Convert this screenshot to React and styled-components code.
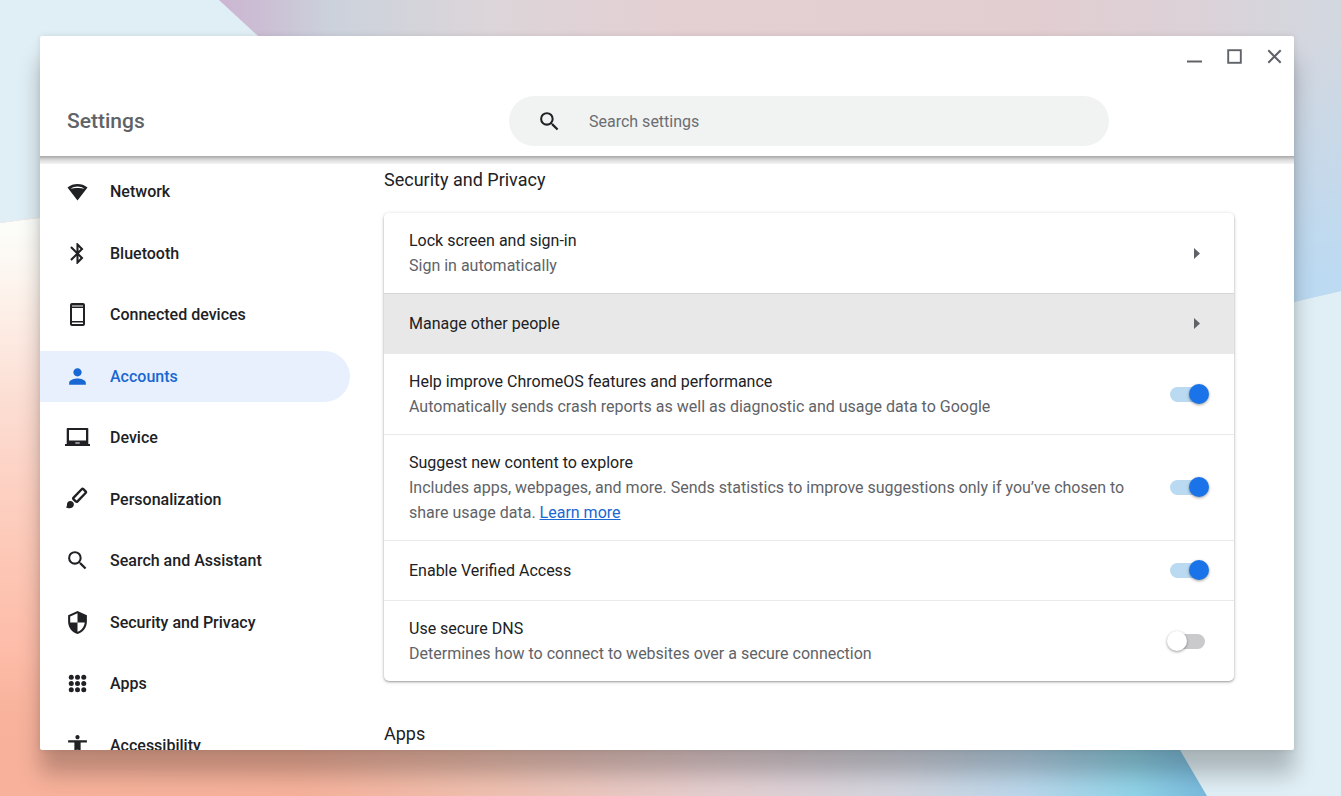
import React, { useState } from "react";
import styled, { createGlobalStyle, css } from "styled-components";
import {
  MdAccessibility,
  MdBluetooth,
  MdPerson,
  MdSearch,
  MdSecurity,
} from "react-icons/md";

const GlobalStyle = createGlobalStyle`
  * {
    box-sizing: border-box;
  }

  body {
    margin: 0;
    font-family: Roboto, "Liberation Sans", sans-serif;
    font-size: 16px;
    line-height: 25px;
    color: #202124;
  }

  button, input {
    font: inherit;
    color: inherit;
  }
`;

function NetworkIcon() {
  return (
    <svg width="25" height="25" viewBox="0 0 25 25" fill="currentColor">
      <path
        fillRule="evenodd"
        d="M2.5 8.4C8.3 3.9 16.7 3.9 22.5 8.4L12.5 21.5ZM5.6 9.9C9.5 8.7 15.5 8.7 19.4 9.9C15.5 6.8 9.5 6.8 5.6 9.9Z"
      />
    </svg>
  );
}

function PhoneIcon() {
  return (
    <svg width="25" height="25" viewBox="0 0 25 25" fill="currentColor">
      <path
        fillRule="evenodd"
        d="M7 1h11a2 2 0 0 1 2 2v19a2 2 0 0 1-2 2H7a2 2 0 0 1-2-2V3a2 2 0 0 1 2-2ZM7 3.4v1h11v-1ZM7 6v13h11V6ZM7 20.4v1.500h11v-1.500Z"
      />
    </svg>
  );
}

function LaptopIcon() {
  return (
    <svg width="25" height="25" viewBox="0 0 25 25" fill="currentColor">
      <path
        fillRule="evenodd"
        d="M2.5 3h20q.8 0 .8.8V19H25v2H0v-2h1.7V3.8q0-.8.8-.8ZM4 5v10.5h17V5ZM10.3 17.5v1h4.4v-1Z"
      />
    </svg>
  );
}

function BrushIcon() {
  return (
    <svg width="25" height="25" viewBox="0 0 25 25" fill="currentColor">
      <rect
        x="7.6"
        y="5.6"
        width="14"
        height="5.4"
        rx="1.2"
        fill="none"
        stroke="currentColor"
        strokeWidth="2.4"
        transform="rotate(-46 14.6 8.3)"
      />
      <path d="M5.2 14c2.2 0 3.7 1.5 3.7 3.4 0 2.4-1.9 3.8-4.4 3.8-1.3 0-2.6-.3-3.5-1 .7-.5 1-1.3 1-2.7C2 15.5 3.3 14 5.2 14Z" />
    </svg>
  );
}

function DotsIcon() {
  const steps = [6.25, 12.5, 18.75];
  return (
    <svg width="25" height="25" viewBox="0 0 25 25" fill="currentColor">
      {steps.map((y) =>
        steps.map((x) => <circle key={`${x}-${y}`} cx={x} cy={y} r="2.5" />)
      )}
    </svg>
  );
}

const menu = [
  { label: "Network", icon: <NetworkIcon /> },
  { label: "Bluetooth", icon: <MdBluetooth size={25} /> },
  { label: "Connected devices", icon: <PhoneIcon /> },
  { label: "Accounts", icon: <MdPerson size={25} />, active: true },
  { label: "Device", icon: <LaptopIcon /> },
  { label: "Personalization", icon: <BrushIcon /> },
  { label: "Search and Assistant", icon: <MdSearch size={25} /> },
  { label: "Security and Privacy", icon: <MdSecurity size={25} /> },
  { label: "Apps", icon: <DotsIcon /> },
  { label: "Accessibility", icon: <MdAccessibility size={25} /> },
];

function Wallpaper() {
  return (
    <WallpaperSvg viewBox="0 0 1341 796" preserveAspectRatio="none" aria-hidden="true">
      <defs>
        <linearGradient id="sky" gradientUnits="userSpaceOnUse" x1="219" y1="0" x2="1341" y2="0">
          <stop offset="0" stopColor="#ccb5d2" />
          <stop offset="0.04" stopColor="#cbbfd4" />
          <stop offset="0.1" stopColor="#cbd2dc" />
          <stop offset="0.24" stopColor="#dcd5d9" />
          <stop offset="0.42" stopColor="#e4cfd2" />
          <stop offset="0.72" stopColor="#e2cdd0" />
          <stop offset="0.88" stopColor="#dbd2d8" />
          <stop offset="1" stopColor="#d2d8e0" />
        </linearGradient>
        <linearGradient id="skyFade" x1="0" y1="0" x2="0" y2="1">
          <stop offset="0.1" stopColor="#bcdaf2" stopOpacity="0" />
          <stop offset="0.85" stopColor="#bcdaf2" />
        </linearGradient>
        <linearGradient id="sand" gradientUnits="userSpaceOnUse" x1="0" y1="0" x2="1207" y2="0">
          <stop offset="0" stopColor="#f8b29b" />
          <stop offset="0.25" stopColor="#f5b19a" />
          <stop offset="0.4" stopColor="#efbfae" />
          <stop offset="0.6" stopColor="#e3ced0" />
          <stop offset="0.75" stopColor="#d2d5df" />
          <stop offset="0.85" stopColor="#b9d6ea" />
          <stop offset="0.94" stopColor="#90d2e6" />
          <stop offset="1" stopColor="#78b9dc" />
        </linearGradient>
        <linearGradient id="sandFade" gradientUnits="userSpaceOnUse" x1="0" y1="218" x2="0" y2="750">
          <stop offset="0" stopColor="#fcfefb" />
          <stop offset="0.12" stopColor="#fdf5ee" />
          <stop offset="0.35" stopColor="#fcddd2" />
          <stop offset="0.6" stopColor="#fdcab9" />
          <stop offset="0.82" stopColor="#fdbca8" />
          <stop offset="1" stopColor="#f8b29b" stopOpacity="0" />
        </linearGradient>
      </defs>
      <path d="M219 0L258 36L700 420L1294 302L1341 291V0Z" fill="url(#sky)" />
      <path d="M1200 0H1341V291L1200 324Z" fill="url(#skyFade)" />
      <path d="M0 223Q20 220 40 218C500 180 900 300 1180 750L1207 796H0Z" fill="url(#sand)" />
      <path d="M0 223Q20 220 40 218C500 180 900 300 1180 750H0Z" fill="url(#sandFade)" />
    </WallpaperSvg>
  );
}

function LinkRow({ title, sub, hovered }) {
  return (
    <RowButton type="button" $hovered={hovered}>
      <RowText>
        <RowTitle>{title}</RowTitle>
        {sub && <RowSub>{sub}</RowSub>}
      </RowText>
      <Arrow width="6" height="11" viewBox="0 0 6 11" aria-hidden="true">
        <path d="M0 0L6 5.5L0 11Z" fill="currentColor" />
      </Arrow>
    </RowButton>
  );
}

function ToggleRow({ id, title, children, defaultOn }) {
  const [on, setOn] = useState(Boolean(defaultOn));
  return (
    <Row>
      <RowText>
        <RowTitle as="label" htmlFor={id}>
          {title}
        </RowTitle>
        {children && <RowSub>{children}</RowSub>}
      </RowText>
      <Toggle id={id} type="checkbox" checked={on} onChange={() => setOn(!on)} />
    </Row>
  );
}

function App() {
  return (
    <Desktop>
      <GlobalStyle />
      <Wallpaper />
      <Window>
        <Header>
          <Controls>
            <ControlButton type="button" aria-label="Minimize">
              <svg width="15" height="15" viewBox="0 0 15 15">
                <path d="M0 12.5H15" stroke="currentColor" strokeWidth="2" />
              </svg>
            </ControlButton>
            <ControlButton type="button" aria-label="Maximize">
              <svg width="15" height="15" viewBox="0 0 15 15">
                <rect x="1.2" y="1.2" width="12.6" height="12.6" fill="none" stroke="currentColor" strokeWidth="1.9" />
              </svg>
            </ControlButton>
            <ControlButton type="button" aria-label="Close">
              <svg width="15" height="15" viewBox="0 0 15 15">
                <path d="M1.3 1.3L13.7 13.7M13.7 1.3L1.3 13.7" stroke="currentColor" strokeWidth="2" />
              </svg>
            </ControlButton>
          </Controls>
          <Toolbar>
            <Title>Settings</Title>
            <SearchArea>
              <SearchBox>
                <MdSearch size={25} />
                <SearchInput type="search" placeholder="Search settings" aria-label="Search settings" />
              </SearchBox>
            </SearchArea>
          </Toolbar>
        </Header>
        <Body>
          <Sidebar>
            {menu.map((item) => (
              <MenuItem key={item.label} href={`#${item.label}`} $active={item.active}>
                {item.icon}
                {item.label}
              </MenuItem>
            ))}
          </Sidebar>
          <Main>
            <SectionTitle>Security and Privacy</SectionTitle>
            <Card>
              <LinkRow title="Lock screen and sign-in" sub="Sign in automatically" />
              <LinkRow title="Manage other people" hovered />
              <ToggleRow id="metrics" title="Help improve ChromeOS features and performance" defaultOn>
                Automatically sends crash reports as well as diagnostic and usage data to Google
              </ToggleRow>
              <ToggleRow id="suggest" title="Suggest new content to explore" defaultOn>
                Includes apps, webpages, and more. Sends statistics to improve suggestions only if
                you’ve chosen to share usage data. <Link href="#learn-more">Learn more</Link>
              </ToggleRow>
              <ToggleRow id="verified" title="Enable Verified Access" defaultOn />
              <ToggleRow id="dns" title="Use secure DNS">
                Determines how to connect to websites over a secure connection
              </ToggleRow>
            </Card>
            <SectionTitle>Apps</SectionTitle>
          </Main>
        </Body>
      </Window>
    </Desktop>
  );
}

const Desktop = styled.div`
  position: relative;
  display: flex;
  height: 100vh;
  padding: 36px 47px 46px 40px;
  background: #e0eff5;
  overflow: hidden;
`;

const WallpaperSvg = styled.svg`
  position: absolute;
  inset: 0;
  width: 100%;
  height: 100%;
`;

const Window = styled.div`
  position: relative;
  flex: 1;
  min-width: 0;
  display: flex;
  flex-direction: column;
  border-radius: 2px;
  background: #fff;
  box-shadow: 0 24px 22px rgba(0, 0, 0, 0.24), 0 0 6px rgba(0, 0, 0, 0.1);
`;

const Header = styled.header`
  position: relative;
  z-index: 1;
  flex: none;

  &::after {
    content: "";
    position: absolute;
    top: 100%;
    left: 0;
    right: 0;
    height: 8px;
    background: linear-gradient(#a8a8a8, #dcdcdc 50%, #f4f4f4);
  }
`;

const Controls = styled.div`
  display: flex;
  justify-content: flex-end;
`;

const ControlButton = styled.button`
  display: flex;
  align-items: center;
  justify-content: center;
  width: 40px;
  height: 41px;
  padding: 0;
  border: 0;
  background: none;
  color: #5f6368;
`;

const Toolbar = styled.div`
  display: flex;
  align-items: center;
  padding: 19px 0 10px;
`;

const Title = styled.h1`
  flex: none;
  width: 310px;
  margin: 0;
  padding-left: 27px;
  font-size: 21px;
  font-weight: 500;
  color: #5f6368;
`;

const SearchArea = styled.div`
  flex: 1;
  display: flex;
  justify-content: center;
  padding: 0 60px 0 34px;
`;

const SearchBox = styled.div`
  display: flex;
  align-items: center;
  gap: 27px;
  width: 100%;
  max-width: 600px;
  height: 50px;
  padding: 0 28px;
  border-radius: 25px;
  background: #f1f3f3;
`;

const SearchInput = styled.input`
  flex: 1;
  min-width: 0;
  padding: 0;
  border: 0;
  outline: 0;
  background: none;

  &::placeholder {
    color: #6b6d71;
    opacity: 1;
  }
`;

const Body = styled.div`
  flex: 1;
  min-height: 0;
  display: flex;
  overflow: auto;
  scrollbar-width: none;
`;

const Sidebar = styled.nav`
  flex: none;
  width: 310px;
  height: 615px;
  margin-top: 5px;
  display: grid;
  grid-auto-rows: 1fr;
  align-items: center;
`;

const MenuItem = styled.a`
  display: flex;
  align-items: center;
  gap: 20px;
  height: 51px;
  padding-left: 25px;
  border-radius: 0 26px 26px 0;
  font-weight: 500;
  text-decoration: none;
  color: #202124;
  ${(props) =>
    props.$active &&
    css`
      color: #1967d2;
      background: #e8f0fe;
    `}
`;

const Main = styled.main`
  flex: 1;
  min-width: 0;
  padding: 11px 60px 0 34px;
`;

const SectionTitle = styled.h2`
  max-width: 850px;
  margin: 0 auto 21px;
  font-size: 18px;
  font-weight: 400;
`;

const Card = styled.section`
  max-width: 850px;
  margin: 0 auto 40px;
  border-radius: 5px;
  background: #fff;
  box-shadow: 0 1px 2px rgba(60, 64, 67, 0.4), 0 1px 4px rgba(60, 64, 67, 0.2);
  overflow: hidden;
`;

const rowStyle = css`
  display: flex;
  align-items: center;
  gap: 30px;
  width: 100%;
  min-height: 60px;
  padding: 15px 29px 15px 25px;
  border: 0;
  border-top: 1px solid #e9e9ea;
  text-align: left;

  &:first-child {
    border-top: 0;
  }
`;

const Row = styled.div`
  ${rowStyle}
`;

const RowButton = styled.button`
  ${rowStyle}
  padding-right: 34px;
  background: #fff;
  ${(props) =>
    props.$hovered &&
    css`
      border-top-color: #d6d6d6;
      background: #e8e8e8;
    `}
`;

const RowText = styled.div`
  flex: 1;
  min-width: 0;
`;

const RowTitle = styled.div`
  display: block;
`;

const RowSub = styled.div`
  color: #5f6368;
`;

const Link = styled.a`
  color: #1967d2;
`;

const Arrow = styled.svg`
  flex: none;
  color: #5f6368;
`;

const Toggle = styled.input`
  appearance: none;
  position: relative;
  flex: none;
  width: 35px;
  height: 15px;
  margin: 0;
  border-radius: 8px;
  background: #cacacc;

  &::before {
    content: "";
    position: absolute;
    top: -3px;
    left: -3px;
    width: 20px;
    height: 20px;
    border-radius: 50%;
    background: #fff;
    box-shadow: 0 1px 3px rgba(0, 0, 0, 0.4);
  }

  &:checked {
    background: #badaf2;
  }

  &:checked::before {
    left: 19px;
    background: #1a73e8;
  }
`;

export default App;
